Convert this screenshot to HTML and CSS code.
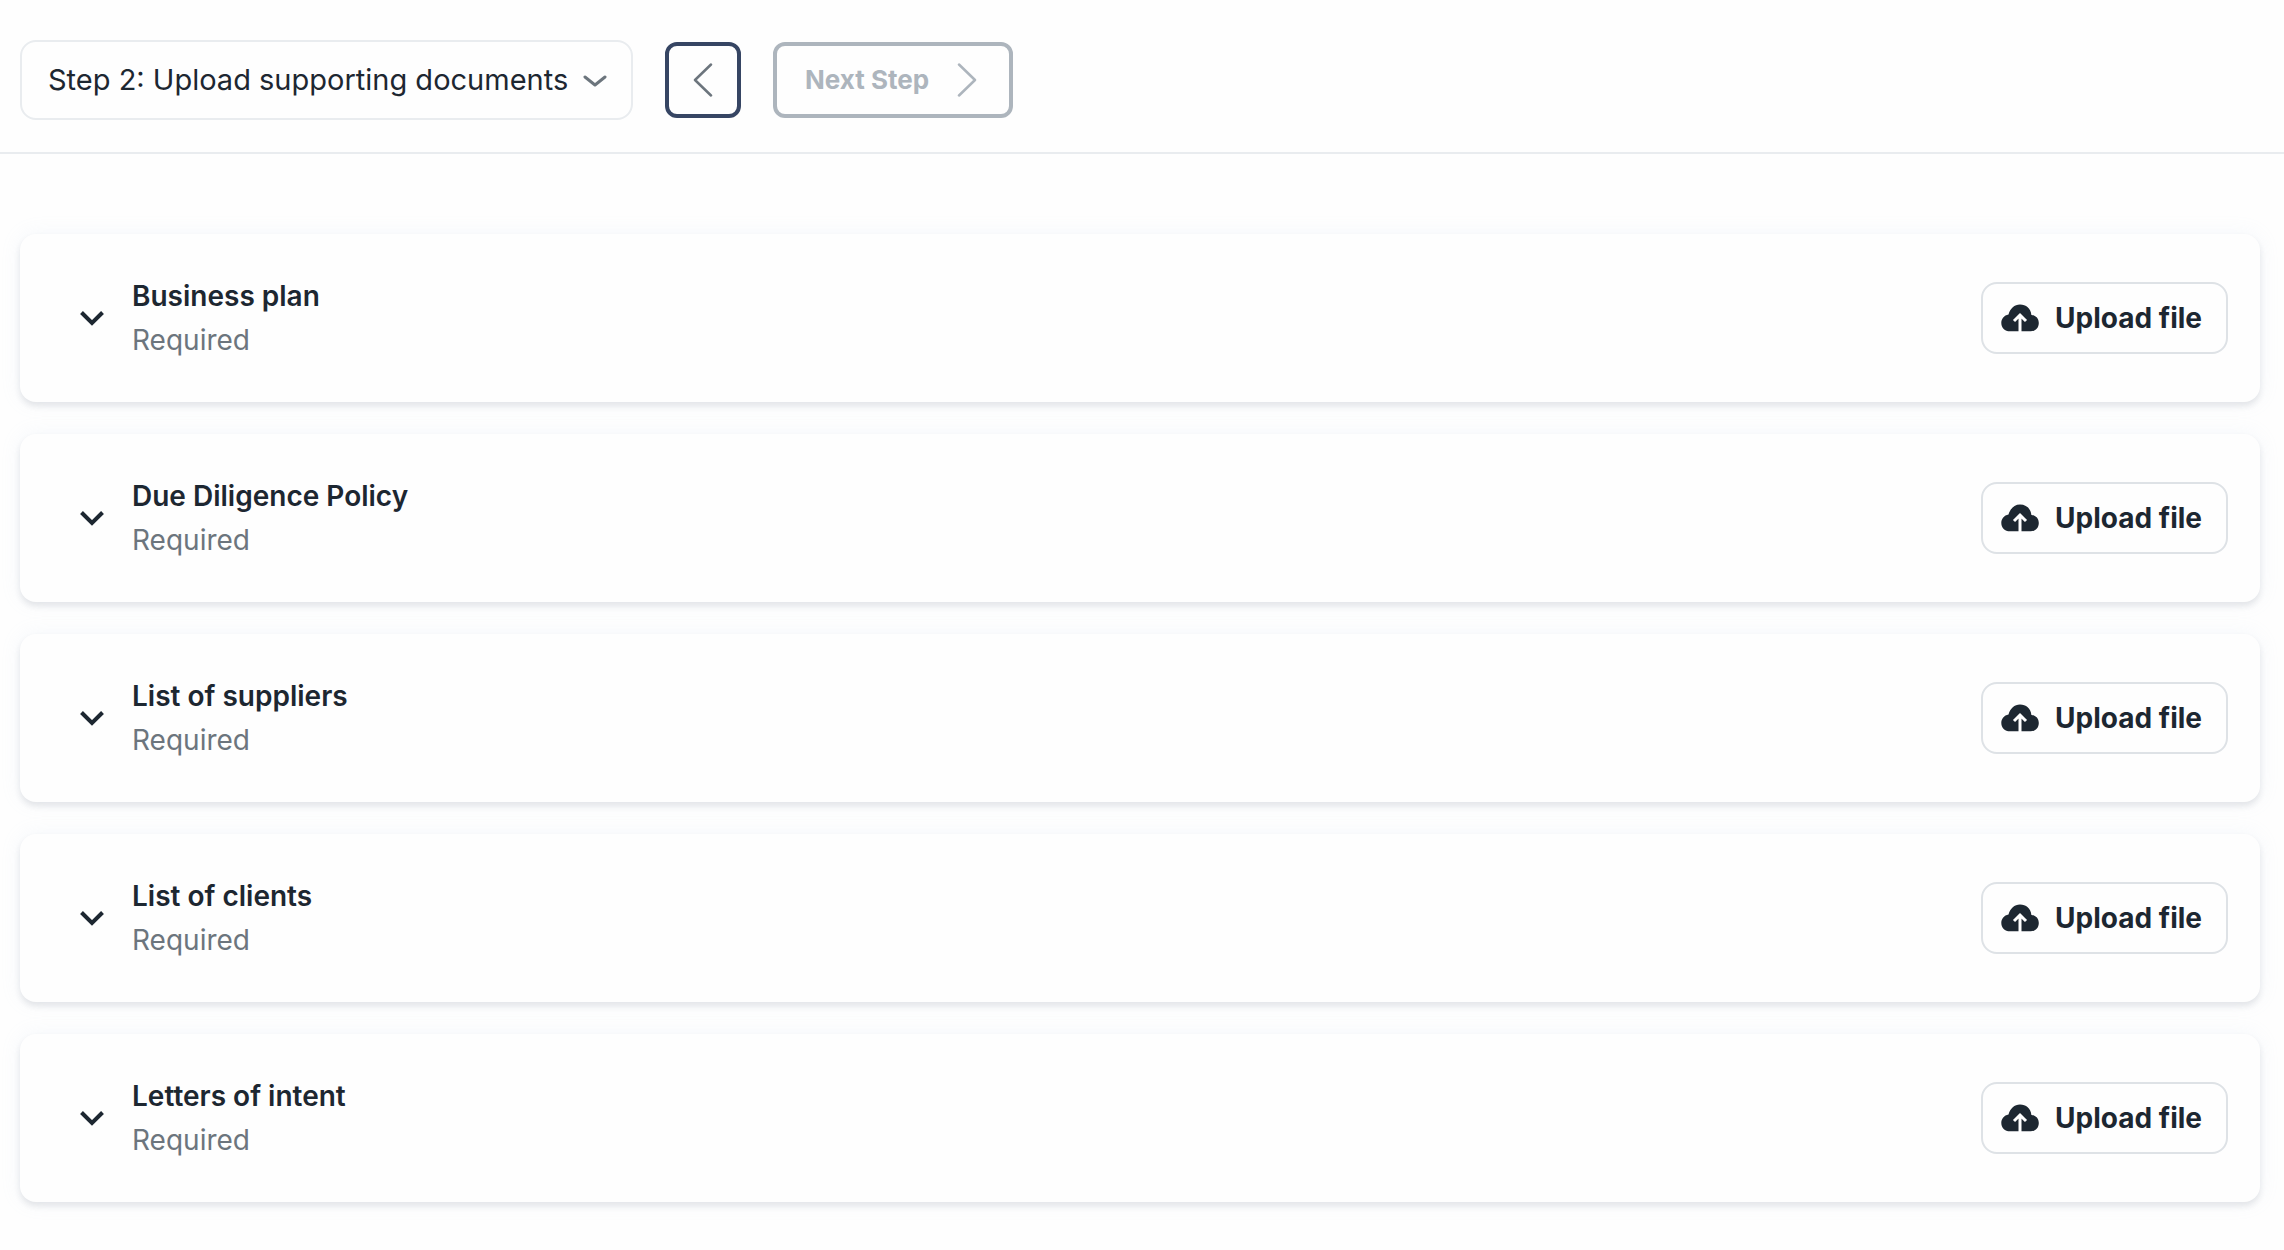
FILE: index.html
```html
<!DOCTYPE html>
<html lang="en">
<head>
<meta charset="utf-8">
<meta name="viewport" content="width=device-width, initial-scale=1">
<title>Upload supporting documents</title>
<link rel="stylesheet" href="styles.css">
</head>
<body>
<svg class="sprite" aria-hidden="true">
  <symbol id="chevron" viewBox="0 0 28 18"><path d="M3.500 3.500L14 14 24.500 3.500" fill="none" stroke="currentColor" stroke-width="4" stroke-linejoin="miter"/></symbol>
  <symbol id="cloud" viewBox="0 0 38 28"><path d="M9 27.300C3.800 27.300.3 23.800.3 19c0-4.300 2.800-7.700 7.200-8.500C9.300 4.500 13.400.6 19 .6c6 0 10.800 4 11.400 10.300 4.500.4 7.400 3.600 7.400 8 0 4.900-3.500 8.400-8.200 8.400z" fill="currentColor"/><path d="M19 28V11M13 17l6-6 6 6" fill="none" stroke="#fefefe" stroke-width="3"/></symbol>
</svg>
<header class="toolbar">
  <div class="step-picker">
    <select class="step-select" aria-label="Current step">
      <option>Step 2: Upload supporting documents</option>
    </select>
    <svg class="step-arrow" viewBox="0 0 24 12" aria-hidden="true"><path d="M2 2l10 8 10-8" fill="none" stroke="currentColor" stroke-width="3" stroke-linecap="round" stroke-linejoin="round"/></svg>
  </div>
  <button class="nav-button nav-prev" type="button" aria-label="Previous step">
    <svg class="nav-icon" viewBox="0 0 20 34" aria-hidden="true"><path d="M18 1.500L2 17l16 15.500" fill="none" stroke="currentColor" stroke-width="2.500" stroke-linecap="round" stroke-linejoin="round"/></svg>
  </button>
  <button class="nav-button nav-next" type="button" disabled>
    Next Step
    <svg class="nav-icon" viewBox="0 0 20 34" aria-hidden="true"><path d="M2 1.500L18 17 2 32.500" fill="none" stroke="currentColor" stroke-width="2.500" stroke-linecap="round" stroke-linejoin="round"/></svg>
  </button>
</header>
<main class="documents">
  <section class="card">
    <button class="toggle" type="button" aria-label="Show Business plan"><svg class="chevron"><use href="#chevron"/></svg></button>
    <div class="info"><h2 class="title">Business plan</h2><p class="note">Required</p></div>
    <button class="upload" type="button"><svg class="cloud"><use href="#cloud"/></svg>Upload file</button>
  </section>
  <section class="card">
    <button class="toggle" type="button" aria-label="Show Due Diligence Policy"><svg class="chevron"><use href="#chevron"/></svg></button>
    <div class="info"><h2 class="title">Due Diligence Policy</h2><p class="note">Required</p></div>
    <button class="upload" type="button"><svg class="cloud"><use href="#cloud"/></svg>Upload file</button>
  </section>
  <section class="card">
    <button class="toggle" type="button" aria-label="Show List of suppliers"><svg class="chevron"><use href="#chevron"/></svg></button>
    <div class="info"><h2 class="title">List of suppliers</h2><p class="note">Required</p></div>
    <button class="upload" type="button"><svg class="cloud"><use href="#cloud"/></svg>Upload file</button>
  </section>
  <section class="card">
    <button class="toggle" type="button" aria-label="Show List of clients"><svg class="chevron"><use href="#chevron"/></svg></button>
    <div class="info"><h2 class="title">List of clients</h2><p class="note">Required</p></div>
    <button class="upload" type="button"><svg class="cloud"><use href="#cloud"/></svg>Upload file</button>
  </section>
  <section class="card">
    <button class="toggle" type="button" aria-label="Show Letters of intent"><svg class="chevron"><use href="#chevron"/></svg></button>
    <div class="info"><h2 class="title">Letters of intent</h2><p class="note">Required</p></div>
    <button class="upload" type="button"><svg class="cloud"><use href="#cloud"/></svg>Upload file</button>
  </section>
</main>
</body>
</html>
```
FILE: styles.css
```css
* {
  box-sizing: border-box;
}

body {
  margin: 0;
  background: #fefefe;
  color: #1d2731;
  font-family: Inter, "Liberation Sans", sans-serif;
  font-size: 28px;
  line-height: 44px;
}

button,
select {
  font: inherit;
  color: inherit;
  background: #fefefe;
}

.sprite {
  position: absolute;
  width: 0;
  height: 0;
}

.toolbar {
  display: flex;
  align-items: center;
  gap: 32px;
  padding: 40px 20px 32px;
  border-bottom: 2px solid #e9ecef;
}

.step-picker {
  position: relative;
  display: flex;
}

.step-select {
  appearance: none;
  height: 80px;
  padding: 0 62px 0 26px;
  border: 2px solid #e9ecef;
  border-radius: 16px;
  font-size: 29px;
}

.step-arrow {
  position: absolute;
  top: 35px;
  right: 26px;
  width: 24px;
  height: 12px;
  color: #6c757d;
  pointer-events: none;
}

.nav-button {
  display: flex;
  align-items: center;
  justify-content: center;
  height: 76px;
  border: 4px solid;
  border-radius: 12px;
  font-size: 26px;
  font-weight: 700;
}

.nav-prev {
  width: 76px;
  padding: 0;
  border-color: #364563;
  color: #6c757d;
}

.nav-next {
  gap: 28px;
  padding: 0 32px 0 28px;
  color: #adb5bd;
}

.nav-icon {
  width: 20px;
  height: 34px;
}

.documents {
  display: grid;
  gap: 32px;
  padding: 80px 24px 48px 20px;
}

.card {
  display: flex;
  align-items: center;
  padding: 40px 32px 40px 58px;
  border-radius: 16px;
  background: #fefefe;
  box-shadow: 0 0 20px rgba(173, 200, 230, 0.12), 0 4px 6px rgba(33, 45, 60, 0.11);
}

.toggle {
  display: flex;
  margin-right: 26px;
  padding: 0;
  border: 0;
}

.chevron {
  width: 28px;
  height: 18px;
}

.info {
  flex: 1;
}

.title,
.note {
  margin: 0;
  font-size: 28px;
}

.title {
  font-weight: 600;
}

.note {
  color: #6c757d;
}

.upload {
  display: flex;
  align-items: center;
  gap: 16px;
  height: 72px;
  padding: 0 24px 0 18px;
  border: 2px solid #dee2e6;
  border-radius: 16px;
  font-weight: 700;
}

.cloud {
  width: 38px;
  height: 28px;
}
```
